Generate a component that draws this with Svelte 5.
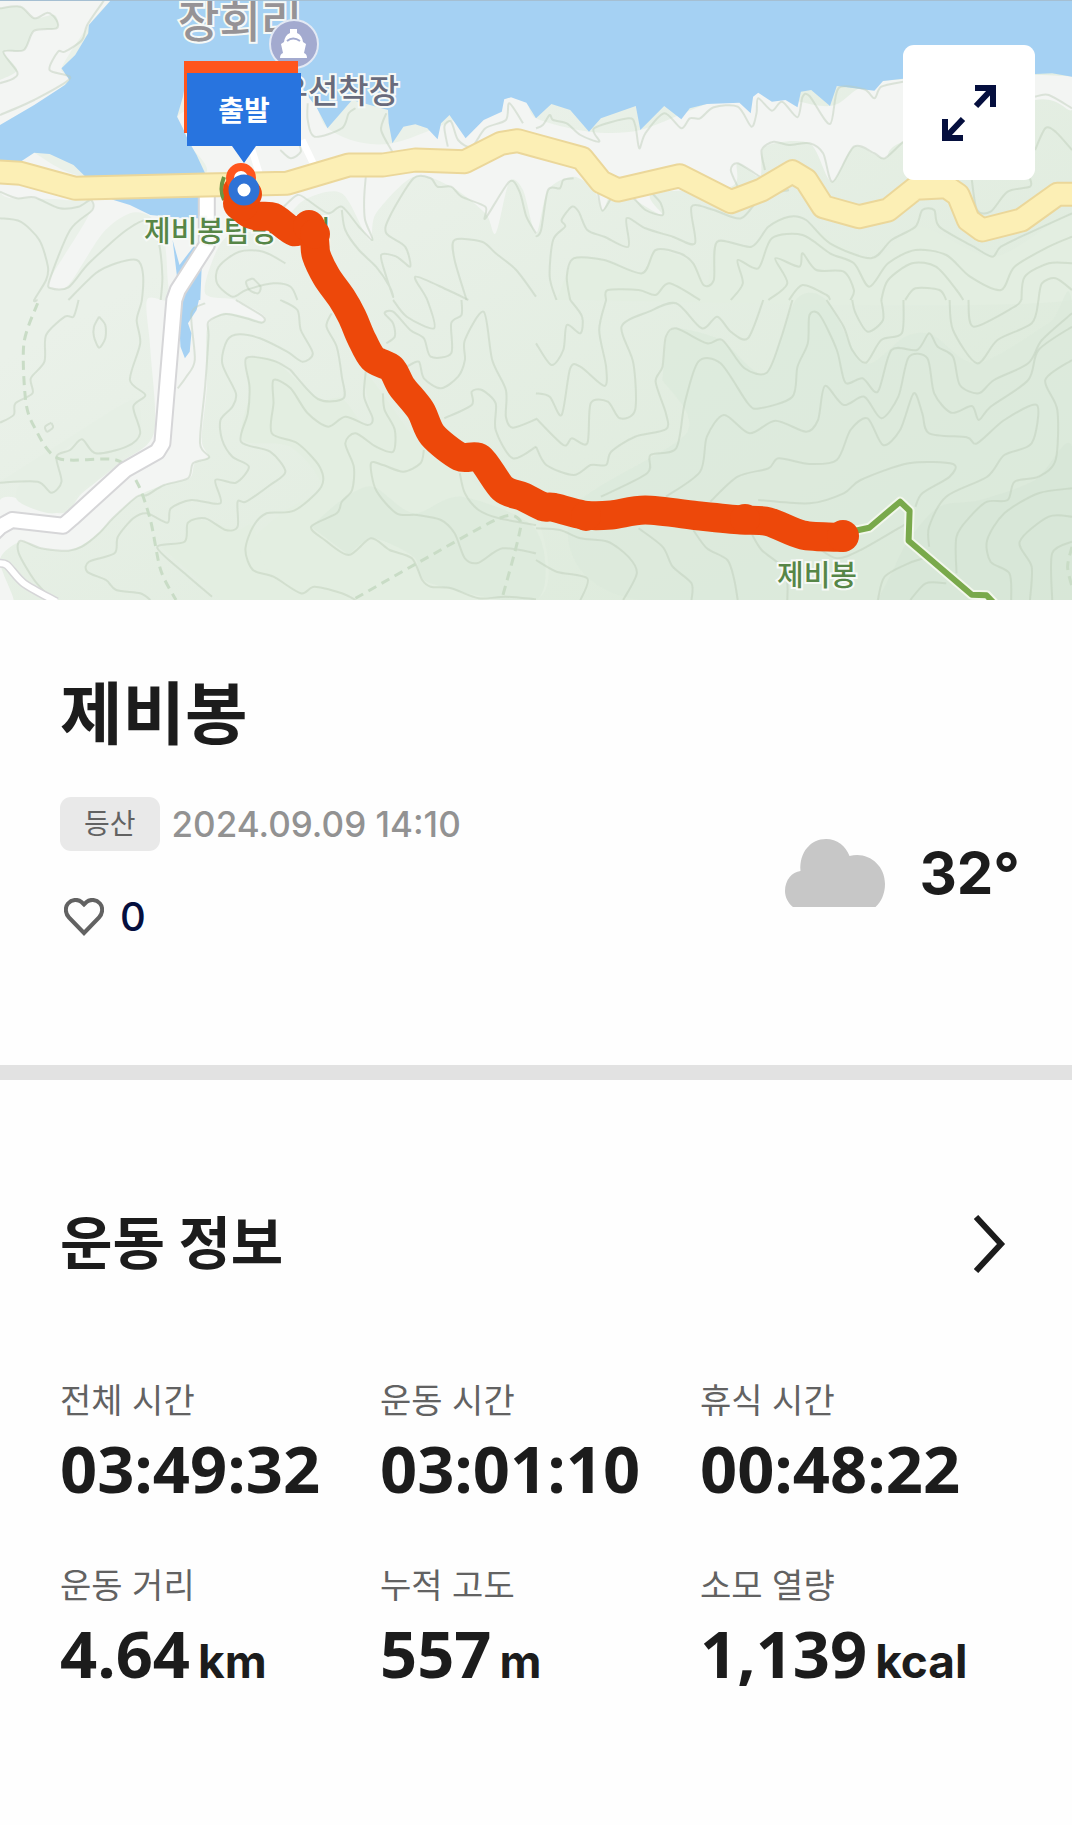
<script>
  // Map geometry is stored per tile in tile units and projected to map pixels.
  const tiles = { nw: [0, 0], ne: [536, 0], sw: [0, 300], se: [536, 300] };

  function project(tile, text) {
    const [ox, oy] = tiles[tile];
    return text.trim().split(' ').map((pair) => {
      const [x, y] = pair.split(',').map(Number);
      return [ox + (x * 536) / 1568, oy + y / 3];
    });
  }

  const point = (p) => `${p[0].toFixed(1)} ${p[1].toFixed(1)}`;

  function straight(parts) {
    return 'M' + parts.flatMap(([tile, text]) => project(tile, text)).map(point).join('L');
  }

  // Catmull-Rom spline through the points
  function smooth(parts) {
    const p = parts.flatMap(([tile, text]) => project(tile, text));
    let d = 'M' + point(p[0]);
    for (let i = 0; i < p.length - 1; i++) {
      const a = p[i - 1] ?? p[i];
      const b = p[i];
      const c = p[i + 1];
      const e = p[i + 2] ?? c;
      const c1 = [b[0] + (c[0] - a[0]) / 7, b[1] + (c[1] - a[1]) / 7];
      const c2 = [c[0] - (e[0] - b[0]) / 7, c[1] - (e[1] - b[1]) / 7];
      d += `C${point(c1)} ${point(c2)} ${point(c)}`;
    }
    return d;
  }

  const lake = straight([
    ['nw', '325,0 260,75 258,100 220,165 180,205 203,240 190,255 100,315 0,375 0,500 60,485 100,458 145,462 215,495 250,530 400,560 600,520 575,465 550,420 535,385 518,350 535,290 548,220 870,220 890,275 925,320 958,385 1030,300 1135,330 1137,370 1148,430 1180,380 1215,373 1250,385 1280,418 1290,370 1315,345 1362,415 1415,360 1468,335 1475,298 1495,292 1540,308 1568,355'],
    ['ne', '0,355 45,312 100,330 155,395 190,355 292,318 305,390 375,318 425,358 450,325 500,312 595,308 628,340 635,290 650,278 690,305 730,300 765,322 775,275 805,270 860,318 880,258 990,272 1015,243 1074,236 1460,222 1510,220 1568,230 1568,0']
  ]);
  const inlets = [
    straight([['nw', '325,598 585,585 585,655 540,655 440,645 380,615']]),
    straight([['nw', '505,720 525,795 570,735 600,735 590,800 586,900'], ['sw', '582,0 575,30 550,70 560,100 555,155 541,175 528,140 520,0'], ['nw', '520,850']])
  ];

  const paleLand = [
    smooth([['nw', '0,375 0,575 100,595 190,600 270,620 150,830 150,865 200,855 300,700 380,640 440,650 480,720 490,830 490,900'], ['sw', '430,0 440,150 450,400 350,490 240,580 180,640 0,600 0,900 40,900 0,780 60,725 120,745 200,752 270,715 330,655 400,590 480,555 555,535 570,490 610,470 590,420 605,260 605,90 650,40 720,50 770,65 770,45 690,0'], ['nw', '600,880 630,760 680,700 800,690 890,600 1000,580 1080,720 1100,640 1210,530 1320,560 1420,640 1450,700 1490,545 1530,570'], ['ne', '0,700 35,570 110,530 170,570 195,630 230,560 290,600 370,645 340,580 570,560 590,490 655,530 670,440 800,430 865,545 930,440 1020,475 1074,425 1460,300 1568,330 1568,230 1015,243 860,318 650,278 500,312 305,390 155,395 0,355'], ['nw', '1500,290 1148,430 958,385 870,220 518,350 600,520 250,530 100,458']]),
    smooth([['nw', '325,0 260,75 180,205 203,240 0,375 0,0']])
  ];
  const greenPatches = [
    { tone: 'leaf', d: smooth([['nw', '0,25 60,20 100,55 160,45 165,85 100,90 70,150 10,155 50,210 0,240']]) },
    { tone: 'leaf', d: smooth([['sw', '0,545 110,545 150,575 180,545 160,475 240,420 280,460 400,430 380,350 250,420 80,530 50,600 160,640 240,570 350,480 410,400 400,300 330,330']]) },
    { tone: 'moss', d: smooth([['sw', '720,175 800,180 930,295 1000,295 1060,370 1090,360 1070,220 1240,450 1350,520 1460,600 1568,640 1568,900 1040,900 880,880 740,810 720,740 830,635 940,560 850,440 710,420 730,290']]) },
    { tone: 'moss', d: smooth([['sw', '470,740 540,720 560,655 690,690 740,680 800,830 1040,900 650,900']]) },
    { tone: 'moss', d: smooth([['ne', '110,770 200,780 310,820 350,750 460,790 500,855 530,725 630,740 740,650 980,775 1120,680 1340,770 1568,650 1568,900 60,900']]) },
    { tone: 'pine', d: smooth([['se', '380,120 410,85 540,120 670,220 760,0 850,0 960,190 1080,110 1160,105 1290,190 1500,70 1568,20 1568,900 300,900 100,640 440,400 370,240']]) },
    { tone: 'pine', d: smooth([['sw', '910,680 1000,600 1090,560 1210,640 1350,590 1568,690 1568,900 1260,850 1210,770 1090,715 1020,765']]) },
    { tone: 'deep', d: smooth([['se', '1000,900 1040,820 1090,720 1180,620 1300,600 1460,540 1568,440 1568,900']]) }
  ];

  const contours = [
    [['nw', '0,25 60,20 100,55 140,38 165,60 165,85 100,92 70,150 10,155 50,215 40,235 0,250']],
    [['nw', '305,0 255,75 240,120 190,155 170,155 145,210 205,235 100,300 0,345']],
    [['nw', '0,575 50,595 100,592 175,625 230,620 265,600 270,630 205,690 145,840 150,865 200,862 260,790 370,690 440,660 465,730 475,830 470,900']],
    [['nw', '0,655 60,665 115,720 140,800 135,840 100,900'], ['sw', '110,0']],
    [['nw', '200,900 280,820 340,790 400,780 418,820 415,900'], ['sw', '400,60 410,130 380,240 425,285 390,320 410,400 370,440 280,460 240,418 205,450 165,470 180,545 150,578 110,545 0,548']],
    [['sw', '230,0 215,50 190,50 135,105 130,185 90,235 95,280 45,310 40,345 0,368']],
    [['sw', '290,50 275,80 275,110 290,143 308,115 308,75 290,50']],
    [['sw', '150,368 132,380 138,395 155,382 150,368']],
    [['nw', '835,790 770,755 700,755 640,800 635,850 680,890 720,870 800,850 850,860 870,900']],
    [['nw', '740,835 720,845 730,870 755,880 762,860 740,835']],
    [['sw', '600,10 560,40 570,180 545,230 520,265']],
    [['sw', '690,0 770,50 765,68 720,55 660,42 610,65 610,110 600,260 585,430 612,472 565,490 550,535 480,555 430,585 400,590 330,655 290,700 240,740 200,752 120,745 60,722 55,760 100,840 145,890']],
    [['sw', '820,0 870,30 880,90 915,160 885,185 840,155 760,115 700,103 665,120 650,190 690,280 680,320 645,360 650,420 680,470 728,500 690,548 630,540 645,610 560,600 500,625 490,668 430,640 390,655 345,710 335,760 260,785 255,815 310,840 340,870 410,880 440,900']],
    [['sw', '850,210 800,182 720,175 730,260 725,340 705,425 790,455 835,515 790,555 720,605 695,605 695,680 660,690 600,655 550,668 540,725 460,742 540,820 620,890']],
    [['sw', '850,210 930,297 1005,295 1000,230 985,140 955,80 970,40']],
    [['sw', '1070,215 1065,290 1090,355 1075,375 1010,350 960,380 900,340 850,265 800,240 800,310 795,400 870,430 935,500 940,560 860,632 780,640 740,680 718,750 740,810 800,830 880,880 920,860 1000,880 1040,900']],
    [['sw', '1120,280 1125,330 1155,390 1150,455 1100,440 1040,400 1010,430 1035,500 1030,570 1000,605 985,640 910,680 950,720 1020,765 1085,715 1140,750 1205,775 1235,840 1260,860 1320,865 1400,895 1480,890 1568,898']],
    [['sw', '1240,450 1230,490 1180,515 1120,495 1085,490 1100,570 1160,640 1220,645 1290,660 1330,700 1360,775 1400,788 1470,745 1568,760']],
    [['sw', '1345,520 1360,580 1400,630 1460,655 1568,675']],
    [['nw', '830,620 870,585 900,600 960,640 1000,620 1050,680 1090,720 1068,660 1065,600 1070,530']],
    [['nw', '1000,630 1010,690 1050,750 1100,800 1140,860 1150,890 1130,830 1115,765 1160,770 1200,800 1185,740 1130,700 1140,650 1210,535 1260,535 1280,560 1320,560 1350,590 1420,620 1420,655 1490,545 1520,575 1540,650 1568,700']],
    [['nw', '1370,900 1310,870 1215,830 1250,900'], ['sw', '1270,85 1190,50 1150,0']],
    [['sw', '1130,130 1155,110 1150,70 1125,40 1150,35 1200,90 1240,115 1260,170 1320,160 1320,70 1350,45 1350,0']],
    [['nw', '1568,890 1510,810 1450,760 1410,725 1330,720 1330,780 1365,900']],
    [['sw', '1190,200 1225,185 1240,235 1290,265 1340,230 1360,180 1360,120 1415,35 1440,180 1480,270 1480,350 1500,383 1568,358']],
    [['sw', '1300,355 1380,315 1380,275 1410,270 1450,310 1450,390 1500,475 1568,440']],
    [['nw', '820,450 850,475 880,455 870,420']],
    [['nw', '900,310 900,360 920,410 1000,385 1020,340 1040,325']],
    [['nw', '1130,340 1115,390 1148,455']],
    [['nw', '1310,440 1300,380 1320,365 1340,420 1380,440 1420,385 1480,360 1490,310 1530,370']],
    [['ne', '0,385 20,375 40,345 50,360 90,370 130,405 185,425 170,385 270,355 290,375 302,445 320,400 375,340 425,385 450,355 480,355 520,322 590,320 630,380 645,340 650,295 690,332 720,305 765,352 780,290 800,288 860,372 885,265 960,268 990,295 1010,260 1074,245']],
    [['ne', '0,710 15,690 35,570 70,565 80,540 110,535']],
    [['ne', '180,570 195,632 235,575 280,590 320,630 370,645 365,610 340,580']],
    [['ne', '60,900 40,830 50,720 85,680 75,660 105,620 125,635 150,690 200,710 270,740 265,655 320,685 400,710 465,730 455,620 520,630 600,655 660,590 740,570']],
    [['ne', '590,560 570,510 590,490 655,530']],
    [['ne', '670,510 660,450 695,425 740,435 800,430 840,460 868,545 930,440 990,460 1020,475 1074,425']],
    [['ne', '100,900 90,830 110,775 200,780 310,820 350,750 420,760 460,790 490,855 520,840 530,725 630,740 680,680 740,650 790,660 860,730 980,775 1040,720 1110,680 1130,630 1165,630 1180,680 1280,740 1335,770 1360,740 1440,700 1568,640']],
    [['ne', '205,900 210,870 300,870 350,885 390,850 480,900']],
    [['ne', '570,900 605,850 590,780 650,805 690,715 780,705 860,760 930,790 975,860 1030,790 1110,750 1200,765 1270,830 1360,870 1400,800 1500,740 1568,710']],
    [['ne', '680,900 735,850 700,775 770,800 780,760 820,810 900,815 930,870 920,900']],
    [['ne', '740,900 780,855 850,885 860,900']],
    [['ne', '1010,900 1030,840 1100,790 1170,800 1230,870 1250,900']],
    [['ne', '1080,900 1110,865 1180,870 1200,900']],
    [['ne', '1420,900 1430,830 1500,790 1568,790']],
    [['ne', '1470,900 1480,850 1520,835 1568,870']],
    [['ne', '1460,450 1490,385 1520,395 1568,450']],
    [['ne', '1460,290 1500,285 1568,325']],
    [['ne', '1275,540 1290,630 1330,635 1380,575 1445,560 1445,535']],
    [['se', '0,130 45,195 80,150 90,75 130,100 135,50 100,0']],
    [['se', '0,280 40,290 75,345 100,205 130,200 200,258 205,200 185,90 205,0']],
    [['se', '0,355 80,435 105,415 150,430 160,310 210,305 245,355 290,330 285,190 250,80 330,35 410,10 485,85 530,50 570,95 620,115 665,0']],
    [['se', '0,440 30,495 110,525 160,495 205,495 220,455 290,410 380,388 380,340 350,245 370,200 380,110 410,85 500,130 545,120 610,205 675,218 715,120 750,0']],
    [['se', '190,590 325,520 335,465 410,445 435,310 475,185 540,190 620,310 655,325 750,290 765,200 795,130 800,45 830,45 880,150 905,248 955,235 1000,275 1040,150 1115,150 1150,100 1175,140 1220,170 1240,255 1295,280 1340,240 1440,190 1480,120 1568,40']],
    [['se', '380,590 480,515 500,410 550,345 625,400 700,362 790,395 825,360 845,258 900,315 960,290 1010,355 1060,290 1090,172 1145,175 1165,280 1215,338 1275,318 1295,360 1330,320 1440,240 1470,150 1568,80']],
    [['se', '510,605 590,530 680,505 710,475 800,492 880,480 920,390 970,355 1015,435 1065,390 1105,280 1130,340 1150,400 1260,412 1290,430 1370,360 1465,315 1450,430 1370,465 1320,530 1200,590 1150,680 1150,740']],
    [['se', '650,600 800,610 900,580 950,540 1090,490 1220,492 1210,530 1130,580 1110,620']],
    [['se', '850,0 900,80 925,150 965,188 1010,120 1070,100 1075,0']],
    [['se', '925,0 935,40 970,95 1015,60 1010,0']],
    [['se', '1210,0 1220,90 1290,190 1350,120 1450,70 1470,0']],
    [['se', '1265,0 1280,80 1400,20 1420,0']],
    [['se', '1568,180 1490,240 1525,330 1520,480 1470,530 1400,545 1380,600 1320,605 1270,650 1230,710 1230,820']],
    [['se', '1568,565 1470,580 1370,640 1320,720 1330,785 1385,820 1390,900']],
    [['se', '1568,650 1500,650 1415,725 1450,800 1445,900']],
    [['se', '1568,725 1510,760 1510,900']],
    [['se', '0,780 60,815 150,835 130,900']],
    [['se', '0,685 70,690 130,715 210,725 270,770 295,820 255,900']],
    [['se', '300,685 370,740 400,800 455,850 455,900']],
    [['se', '460,690 500,745 560,780 580,840 590,900']],
    [['se', '630,700 660,750 720,800 735,850 735,900']],
    [['se', '820,740 880,775 950,750 1085,670']],
    [['se', '1000,900 1020,830 1090,790 1150,770']],
    [['se', '1095,900 1140,850 1200,850']]
  ].map(smooth);

  const footpaths = [
    [['sw', '110,10 70,130 75,300 100,380 170,475 340,480 400,545 440,660 470,810 515,900']],
    [['sw', '1040,895 1220,790 1460,655 1520,660 1515,720 1470,890']],
    [['se', '1568,740 1555,800 1568,860']]
  ].map(smooth);

  const highway = straight([
    ['nw', '-20,515 60,520 220,565 600,555 840,550 1020,495 1120,495 1215,480 1360,485 1465,430 1515,422 1568,437'],
    ['ne', '135,475 190,545 240,570 420,527 570,605 660,570 750,515 790,540 840,620 945,650 1030,630 1110,565 1200,560 1235,585 1265,660 1305,690 1420,660 1525,583 1580,583']
  ]);
  const lane = straight([['nw', '605,580 605,735 520,870'], ['sw', '510,0 475,430 460,455 365,510 210,655 185,677 35,660 0,680 -20,700']]);
  const alley = smooth([['sw', '-10,790 20,795 70,850 165,905']]);
  const trail = straight([['se', '900,700 975,683 1065,605 1093,632 1090,722 1275,884 1318,886 1340,910']]);
  const route = smooth([
    ['nw', '698,590 715,630 750,648 800,652 860,695 905,680 920,720 925,765 955,830 1000,895'],
    ['sw', '1030,50 1055,110 1090,175 1145,205 1175,260 1230,330 1265,405 1345,470 1405,475 1470,565 1530,590'],
    ['se', '20,620 50,622 140,645 220,645 320,630 480,648 600,660 680,665 780,705 890,712']
  ]);

  const stats = [
    { label: '전체 시간', value: '03:49:32' },
    { label: '운동 시간', value: '03:01:10' },
    { label: '휴식 시간', value: '00:48:22' },
    { label: '운동 거리', value: '4.64', unit: 'km' },
    { label: '누적 고도', value: '557', unit: 'm' },
    { label: '소모 열량', value: '1,139', unit: 'kcal' }
  ];
</script>

<main>
  <section class="map" aria-label="등산 경로 지도">
    <svg class="canvas" viewBox="0 0 1072 600" preserveAspectRatio="xMidYMid slice">
      <defs>
        <linearGradient id="terrain" x1="0" y1="0" x2="1" y2="1">
          <stop offset="0.3" stop-color="#eaf1e9" />
          <stop offset="1" stop-color="#dae9d8" />
        </linearGradient>
      </defs>
      <rect width="1072" height="600" fill="url(#terrain)" />
      {#each paleLand as d}<path class="pale" {d} />{/each}
      {#each greenPatches as patch}<path class={patch.tone} d={patch.d} />{/each}
      <path class="water" d={lake} />
      {#each inlets as d}<path class="water" {d} />{/each}
      {#each contours as d}<path class="contour" {d} />{/each}
      {#each footpaths as d}<path class="footpath" {d} />{/each}
      <path class="side-road" d="M302 140L314 165M252 150L260 176" />
      <path class="lane-edge" d={lane} />
      <path class="lane" d={lane} />
      <path class="alley-edge" d={alley} />
      <path class="alley" d={alley} />
      <path class="highway-edge" d={highway} />
      <path class="highway" d={highway} />
      <path class="trail-halo" d={trail} />
      <path class="trail" d={trail} />

      <text class="place village" x="178" y="38">장회리</text>
      <circle cx="294" cy="44" r="24" fill="#a3aacf" stroke="#e3e9f4" stroke-width="2" />
      <path d="M290 29h7v4q5 2 6 9l3 2-2 9q3 1 3 5h-27q0-4 3-5l-2-9 3-2q1-7 6-9z" fill="#fff" />
      <path d="M287 41q6-5 13 0" fill="none" stroke="#a3aacf" stroke-width="2" />
      <text class="place pier" x="399" y="103" text-anchor="end">유선착장</text>
      <text class="place green" x="144" y="242">제비봉탐방지원</text>
      <text class="place green" x="777" y="586">제비봉</text>

      <path d="M224 177q-5 12 0 23" fill="none" stroke="#6d9443" stroke-width="4" />
      <path class="route" d={route} />
      <circle cx="241" cy="203" r="18" fill="#ed480a" />
      <circle cx="309" cy="226" r="16" fill="#ed480a" />
      <circle cx="315" cy="234" r="15" fill="#ed480a" />
      <circle cx="586" cy="516" r="15" fill="#ed480a" />
      <circle cx="745" cy="519" r="15" fill="#ed480a" />
      <circle cx="843" cy="536" r="16" fill="#ed480a" />
      <circle cx="247" cy="194" r="15" fill="#ed480a" />
      <circle cx="237" cy="190" r="14" fill="#ed480a" />

      <rect x="184" y="61" width="114" height="72" fill="#ff551c" />
      <circle cx="241" cy="178" r="11" fill="#fff" stroke="#ff551c" stroke-width="8" />
      <path d="M187 73H301V146H256L244 163L232 146H187Z" fill="#2874df" />
      <circle cx="244" cy="190" r="11" fill="#fff" stroke="#2f73d6" stroke-width="9" />
      <text class="start" x="244" y="121" text-anchor="middle">출발</text>
      <path d="M0 0H1072" stroke="#a5bfd2" stroke-width="2" />
    </svg>
    <button class="expand" type="button" aria-label="지도 확대">
      <svg width="54" height="56" viewBox="0 0 54 56" fill="none" stroke="#050f3e">
        <path d="M33 3H51V22M50 4L34 21M21 53H3V34M4 52L21 34" stroke-width="6" />
      </svg>
    </button>
  </section>

  <section class="summary">
    <div>
      <h1>제비봉</h1>
      <p class="meta"><span class="tag">등산</span><time datetime="2024-09-09T14:10">2024.09.09 14:10</time></p>
      <button class="like" type="button" aria-label="좋아요 0">
        <svg width="40" height="38" viewBox="0 0 40 38" fill="none" stroke="#626262" stroke-width="4">
          <path d="M20 35L5 19.500C1 15.500 1 9 4 5.500C8 1 14 1 17.500 4L20 6.500L22.500 4C26 1 32 1 36 5.500C39 9 39 15.500 35 19.500Z" />
        </svg>
        <span>0</span>
      </button>
    </div>
    <div class="weather">
      <svg width="100" height="68" viewBox="0 0 100 68" role="img" aria-label="흐림">
        <path d="M8 68C3 64 0 58 0 52C0 41 7 33 15.500 32C14 13 26 0 41 0C52 0 61 7 64.500 17C82 12 100 25 100 45C100 55 96 63 90.500 68Z" fill="#c7c7c7" />
      </svg>
      <strong>32°</strong>
    </div>
  </section>

  <section class="workout">
    <header>
      <h2>운동 정보</h2>
      <button class="more" type="button" aria-label="운동 정보 더보기">
        <svg width="32" height="58" viewBox="0 0 32 58" fill="none" stroke="#1c1c1c" stroke-width="6">
          <path d="M2 2L27 29L2 56" />
        </svg>
      </button>
    </header>
    <dl>
      {#each stats as stat}
        <div class="stat">
          <dt>{stat.label}</dt>
          <dd>{stat.value}{#if stat.unit}<span class="unit">{stat.unit}</span>{/if}</dd>
        </div>
      {/each}
    </dl>
  </section>
</main>

<style>
  :global(body) {
    margin: 0;
    background: #fefefe;
  }

  main {
    color: #1c1c1c;
    font-family: Inter, 'Noto Sans CJK KR', sans-serif;
  }

  h1, h2, p, dl, dd {
    margin: 0;
  }

  button {
    padding: 0;
    border: 0;
    background: none;
    font: inherit;
    cursor: pointer;
  }

  svg {
    display: block;
  }

  .map {
    position: relative;
  }

  .canvas {
    width: 100%;
    height: auto;
  }

  .canvas path {
    stroke-linejoin: round;
  }

  .pale { fill: #f3f5f3; }
  .leaf { fill: #e6efe5; }
  .moss { fill: #e3eee1; }
  .pine { fill: #dceadb; fill-opacity: 0.7; }
  .deep { fill: #d6e5d5; fill-opacity: 0.6; }
  .water { fill: #a5d1f3; }

  .contour {
    fill: none;
    stroke: #bccbb9;
    stroke-opacity: 0.45;
    stroke-width: 2;
  }

  .footpath {
    fill: none;
    stroke: #c9dcc6;
    stroke-width: 3;
    stroke-dasharray: 9 6;
  }

  .side-road { fill: none; stroke: #fff; stroke-width: 7; }
  .lane-edge { fill: none; stroke: #d6d6d8; stroke-width: 18; }
  .lane { fill: none; stroke: #fff; stroke-width: 14; }
  .alley-edge { fill: none; stroke: #d6d6d8; stroke-width: 9; }
  .alley { fill: none; stroke: #fff; stroke-width: 6; }
  .highway-edge { fill: none; stroke: #ebd79a; stroke-width: 25; }
  .highway { fill: none; stroke: #fcefb5; stroke-width: 21; }
  .trail-halo { fill: none; stroke: #f2f7ec; stroke-width: 10; }
  .trail { fill: none; stroke: #79a94b; stroke-width: 6; }

  .route {
    fill: none;
    stroke: #ed480a;
    stroke-width: 29;
    stroke-linecap: round;
  }

  .place {
    font-family: 'Noto Sans CJK KR', sans-serif;
    font-weight: 500;
    stroke: #f6f9f6;
    stroke-width: 4;
    paint-order: stroke;
  }

  .village { font-size: 45px; fill: #969396; }
  .pier { font-size: 33px; fill: #686b7c; }
  .green { font-size: 29px; fill: #568647; }

  .start {
    font-family: 'Noto Sans CJK KR', sans-serif;
    font-size: 28px;
    font-weight: 700;
    fill: #fff;
  }

  .expand {
    position: absolute;
    top: 45px;
    right: 37px;
    display: grid;
    place-items: center;
    width: 132px;
    height: 135px;
    border-radius: 11px;
    background: #fff;
  }

  .summary {
    display: flex;
    justify-content: space-between;
    padding: 66px 52px 124px 60px;
    border-bottom: 15px solid #e2e2e2;
  }

  h1 {
    font-size: 68px;
    line-height: 96px;
    font-weight: 700;
  }

  .meta {
    display: flex;
    align-items: center;
    gap: 12px;
    margin-top: 35px;
    color: #929292;
    font-size: 35px;
    line-height: 54px;
    font-weight: 500;
  }

  .tag {
    padding: 0 24px;
    border-radius: 11px;
    background: #e9e9e9;
    color: #626262;
    font-size: 28px;
    font-weight: 400;
  }

  .like {
    display: flex;
    align-items: center;
    gap: 16px;
    margin-top: 42px;
    padding-left: 4px;
    color: #050f3e;
    font-size: 40px;
    line-height: 48px;
    font-weight: 500;
  }

  .weather {
    display: flex;
    align-items: center;
    align-self: flex-end;
    gap: 34px;
    padding-bottom: 34px;
    font-size: 58px;
    line-height: 64px;
  }

  .weather strong {
    font-weight: 700;
  }

  .workout {
    padding: 124px 52px 120px 60px;
  }

  header {
    display: flex;
    align-items: center;
    justify-content: space-between;
    padding-right: 14px;
  }

  h2 {
    font-size: 57px;
    line-height: 80px;
    font-weight: 700;
  }

  dl {
    display: grid;
    grid-template-columns: repeat(3, 1fr);
    row-gap: 51px;
    margin-top: 92px;
  }

  dt {
    color: #626262;
    font-size: 34px;
    line-height: 50px;
  }

  dd {
    font-family: 'Open Sans', 'Noto Sans CJK KR', sans-serif;
    font-size: 65px;
    line-height: 84px;
    font-weight: 700;
    white-space: nowrap;
  }

  .unit {
    margin-left: 8px;
    font-family: Inter, sans-serif;
    font-size: 46px;
    font-weight: 700;
  }
</style>
